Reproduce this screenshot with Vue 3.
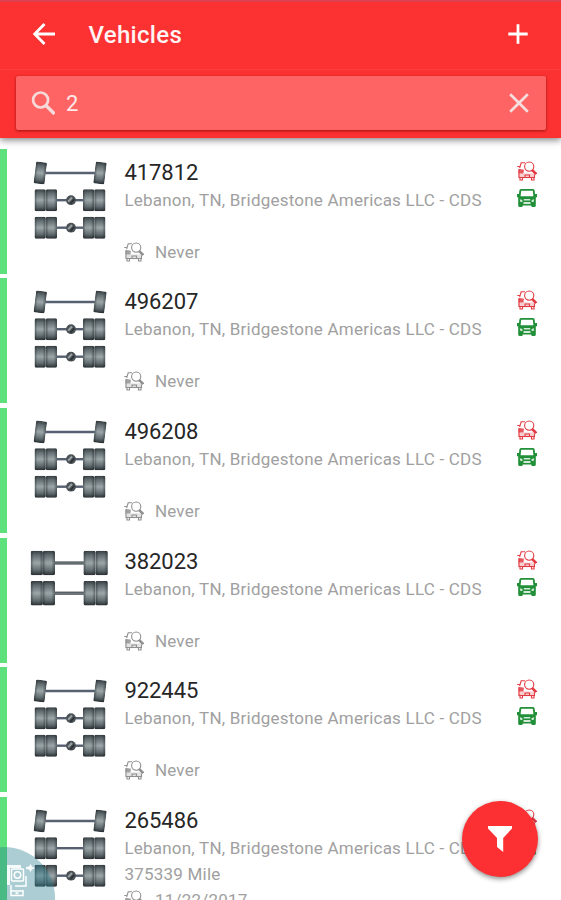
<template>
  <div class="screen">
    <header class="header">
      <div class="toolbar">
        <svg class="icon-back" viewBox="0 0 24 24" width="24" height="24">
          <path d="M23 12H3M12.5 2L2.7 12L12.5 22" fill="none" stroke="#fff" stroke-width="2.8" />
        </svg>
        <h1 class="title">Vehicles</h1>
        <svg class="icon-add" viewBox="0 0 20 20" width="20" height="20">
          <path d="M10 0.3V19.7M0.3 10H19.7" stroke="#fff" stroke-width="2.8" />
        </svg>
      </div>
      <div class="search-box">
        <svg class="icon-search" viewBox="0 0 24 24" width="24" height="24">
          <circle cx="9.6" cy="9" r="7.5" fill="none" stroke="#f6dada" stroke-width="2.7" />
          <path d="M15 14.5L23.5 23" stroke="#f6dada" stroke-width="3.4" />
        </svg>
        <input v-model="keyword" class="search-input" />
        <svg class="icon-clear" viewBox="0 0 20 20" width="20" height="20" @click="keyword = ''">
          <path d="M1.2 1.2L18.8 18.8M18.8 1.2L1.2 18.8" stroke="#f6dede" stroke-width="2.7" />
        </svg>
      </div>
    </header>

    <!-- shared shapes -->
    <svg class="defs" width="0" height="0">
      <defs>
        <linearGradient id="tire-v" x1="0" y1="0" x2="0" y2="1">
          <stop offset="0" stop-color="#363d40" />
          <stop offset="0.18" stop-color="#667175" />
          <stop offset="0.5" stop-color="#a4afb2" />
          <stop offset="0.8" stop-color="#667175" />
          <stop offset="1" stop-color="#282e31" />
        </linearGradient>
        <linearGradient id="tire-h" x1="0" y1="0" x2="1" y2="0">
          <stop offset="0" stop-color="#1d2427" stop-opacity="0.55" />
          <stop offset="0.25" stop-color="#1d2427" stop-opacity="0.08" />
          <stop offset="0.7" stop-color="#1d2427" stop-opacity="0.05" />
          <stop offset="1" stop-color="#1d2427" stop-opacity="0.55" />
        </linearGradient>
        <symbol id="tire" viewBox="0 0 11 22" preserveAspectRatio="none">
          <rect width="11" height="22" rx="1.8" fill="url(#tire-v)" />
          <rect width="11" height="22" rx="1.8" fill="url(#tire-h)" />
        </symbol>
        <symbol id="inspect" viewBox="0 0 20 20">
          <g fill="none" stroke="currentColor" stroke-width="1.1">
            <path d="M8 1.8H4.2L2.6 7M0.3 5.5H2.5M2 8.5V16.5H17.5V13.5M3 16.5V19H5.5V17M14.5 17V19H17V16.5M8 16V14H12.5V16" />
            <circle cx="12.2" cy="5.6" r="4.6" />
          </g>
          <path d="M15 8.8L19.2 13" stroke="currentColor" stroke-width="2.6" />
          <path d="M1.5 7.8L7 8.8L6.4 12.4H1.5Z" fill="currentColor" opacity="0.85" />
          <path d="M1.5 12.4H18V17.2H1.5Z" fill="currentColor" opacity="0.25" />
        </symbol>
        <symbol id="truck" viewBox="0 0 20 18">
          <path fill="currentColor" fill-rule="evenodd" d="M4 0H16Q17.5 0 17.7 1.8L18 5H20V8.2H18.8V16.5Q18.8 18 17.2 18H15.2Q14.2 18 14.2 16.6H5.8Q5.8 18 4.8 18H2.8Q1.2 18 1.2 16.5V8.2H0V5H2L2.3 1.8Q2.5 0 4 0ZM4.2 1.7L3.6 7.2H16.4L15.8 1.7Z" />
          <path d="M2.8 10.3L5.4 11V13H3.4ZM17.2 10.3L14.6 11V13H16.6ZM6.8 10H13.2V11.5H6.8ZM6.5 13H13.5V15H6.5Z" fill="#fff" opacity="0.8" />
        </symbol>
      </defs>
    </svg>

    <main class="list">
      <article v-for="vehicle in vehicles" :key="vehicle.id" class="row">
        <svg class="axles" viewBox="0 0 80 86" width="80" height="86">
          <g v-for="(axle, i) in vehicle.axles" :key="i" :transform="`translate(0 ${axle.y})`">
            <template v-if="axle.type === 'steer'">
              <path d="M15 0H65" stroke="#566071" stroke-width="2.4" />
              <g transform="rotate(7 10.5 0)"><use href="#tire" x="4.8" y="-11" width="11" height="22" /></g>
              <g transform="rotate(7 70 0)"><use href="#tire" x="64.5" y="-11" width="11" height="22" /></g>
            </template>
            <template v-else-if="axle.type === 'wide'">
              <path d="M25 0H54" stroke="#4a5256" stroke-width="3.2" />
              <path d="M25 0H54" stroke="#7b868c" stroke-width="1" />
              <use v-for="x in [0.7, 12.8, 53.5, 65.6]" :key="x" href="#tire" :x="x" y="-12.3" width="12.2" height="24.6" />
            </template>
            <template v-else>
              <path d="M26 0H54" stroke="#566071" stroke-width="2.4" />
              <g v-if="axle.type === 'drive'">
                <circle cx="41" cy="0" r="4.9" fill="#4b5256" />
                <path d="M38.2 1.5L42 -2.7" stroke="#9aa1a5" stroke-width="2" />
                <path d="M40.5 3.6L44.2 -1" stroke="#2a3033" stroke-width="1.5" />
              </g>
              <use v-for="x in [4.6, 15.8, 53, 64.2]" :key="x" href="#tire" :x="x" y="-11" width="11.2" height="22" />
            </template>
          </g>
        </svg>
        <div class="info">
          <div class="number">{{ vehicle.id }}</div>
          <div class="location">Lebanon, TN, Bridgestone Americas LLC - CDS</div>
          <div class="mileage">{{ vehicle.mileage }}</div>
          <div class="inspection">
            <svg class="icon-inspect" width="20" height="20"><use href="#inspect" /></svg>
            <span>{{ vehicle.inspected }}</span>
          </div>
        </div>
        <div class="status">
          <svg class="status-inspect" width="20" height="20"><use href="#inspect" /></svg>
          <svg class="status-truck" width="20" height="18"><use href="#truck" /></svg>
        </div>
      </article>
    </main>

    <button class="fab">
      <svg viewBox="0 0 24 27" width="24" height="27">
        <path d="M0 0H24V2.5L15.2 12V26L9 21V12L0 2.5Z" fill="#fff" />
      </svg>
    </button>

    <div class="device-badge">
      <svg viewBox="0 0 28 34" width="28" height="34">
        <g fill="none" stroke="#fff" stroke-width="1.5">
          <path d="M4 21V31.5H16V26M4 27H16M19 12V22H8" />
          <rect x="4.5" y="5" width="12" height="12" rx="1" />
          <circle cx="10.5" cy="11" r="3.2" />
        </g>
        <path d="M0 1H14V4H3V21H0ZM8.5 28.3H11.5V30.3H8.5ZM19 3L22 2.5L23.5 0L25 2.5L28 4L25 5.5L23.5 8L22 5.5L19 5Z" fill="#fff" opacity="0.9" />
      </svg>
    </div>
  </div>
</template>

<script setup>
import { ref } from 'vue'

const keyword = ref('2')

const tandemDrive = [
  { type: 'steer', y: 14 },
  { type: 'drive', y: 41.2 },
  { type: 'drive', y: 68.7 }
]

const trailer = [
  { type: 'wide', y: 15 },
  { type: 'wide', y: 45.2 }
]

const tagDrive = [
  { type: 'steer', y: 14 },
  { type: 'dual', y: 41.2 },
  { type: 'drive', y: 68.7 }
]

const vehicles = ref([
  { id: '417812', axles: tandemDrive, inspected: 'Never' },
  { id: '496207', axles: tandemDrive, inspected: 'Never' },
  { id: '496208', axles: tandemDrive, inspected: 'Never' },
  { id: '382023', axles: trailer, inspected: 'Never' },
  { id: '922445', axles: tandemDrive, inspected: 'Never' },
  { id: '265486', axles: tagDrive, mileage: '375339 Mile', inspected: '11/22/2017' }
])
</script>

<style>
body {
  background: #fff;
  overflow: hidden;
}
</style>

<style scoped>
.screen {
  position: relative;
  width: 100%;
  height: 900px;
  display: flex;
  flex-direction: column;
  overflow: hidden;
  background: #fff;
  font-family: Roboto, "Liberation Sans", sans-serif;
}

.header {
  flex: none;
  box-sizing: border-box;
  height: 137.5px;
  background: #fc3131;
  border-top: 2px solid #de4053;
  box-shadow: 0 2px 7px rgba(0, 0, 0, 0.5);
  z-index: 1;
}

.toolbar {
  box-sizing: border-box;
  height: 68px;
  padding: 0 33px 3px 32px;
  display: flex;
  align-items: center;
  border-bottom: 1px solid #ff4040;
}

.title {
  flex: 1;
  margin: 1px 0 0 32.5px;
  font-size: 24px;
  line-height: 30px;
  font-weight: 500;
  letter-spacing: 0.3px;
  color: #fff3f3;
}

.search-box {
  box-sizing: border-box;
  height: 54px;
  margin: 6px 15px 0 16px;
  padding: 0 17px 0 15px;
  display: flex;
  align-items: center;
  background: #ff6464;
  border-radius: 2px;
  box-shadow: 0 1px 3px rgba(110, 0, 0, 0.65);
}

.search-input {
  flex: 1;
  min-width: 0;
  margin-left: 11px;
  padding: 1px 0 0;
  border: none;
  outline: none;
  background: none;
  font-family: inherit;
  font-size: 22px;
  color: #ffeaea;
}

.icon-clear {
  cursor: pointer;
}

.defs {
  position: absolute;
}

.list {
  flex: 1;
  min-height: 0;
  padding-top: 11px;
  display: flex;
  flex-direction: column;
  gap: 4.5px;
  overflow: hidden;
}

.row {
  flex: none;
  box-sizing: border-box;
  height: 125.2px;
  padding: 10px 24px 0 23px;
  display: flex;
  align-items: flex-start;
  border-left: 7px solid #5ee07c;
}

.info {
  flex: 1;
  margin-left: 14.4px;
  color: #a0a0a0;
  font-size: 17px;
  letter-spacing: 0.22px;
  white-space: nowrap;
}

.number {
  height: 28px;
  line-height: 28px;
  font-size: 22px;
  color: #262626;
  letter-spacing: -0.05px;
}

.location {
  height: 27px;
  line-height: 27px;
}

.mileage {
  height: 25px;
  line-height: 25px;
}

.inspection {
  height: 26px;
  display: flex;
  align-items: center;
  gap: 10.5px;
}

.icon-inspect {
  color: #909090;
}

.status {
  width: 20px;
  display: flex;
  flex-direction: column;
  gap: 8px;
  padding-top: 2px;
}

.status-inspect {
  color: #e33a42;
}

.status-truck {
  color: #219038;
}

.fab {
  position: absolute;
  left: 462px;
  top: 801px;
  width: 76px;
  height: 76px;
  padding: 1px 0 0;
  display: flex;
  align-items: center;
  justify-content: center;
  border: none;
  border-radius: 50%;
  background: #fc3033;
  box-shadow: 0 2px 5px rgba(0, 0, 0, 0.45);
  z-index: 2;
}

.device-badge {
  position: absolute;
  left: -47px;
  top: 847px;
  box-sizing: border-box;
  width: 102px;
  height: 102px;
  padding: 17px 0 0 54px;
  border-radius: 50%;
  background: rgba(46, 130, 145, 0.4);
  z-index: 2;
}
</style>
